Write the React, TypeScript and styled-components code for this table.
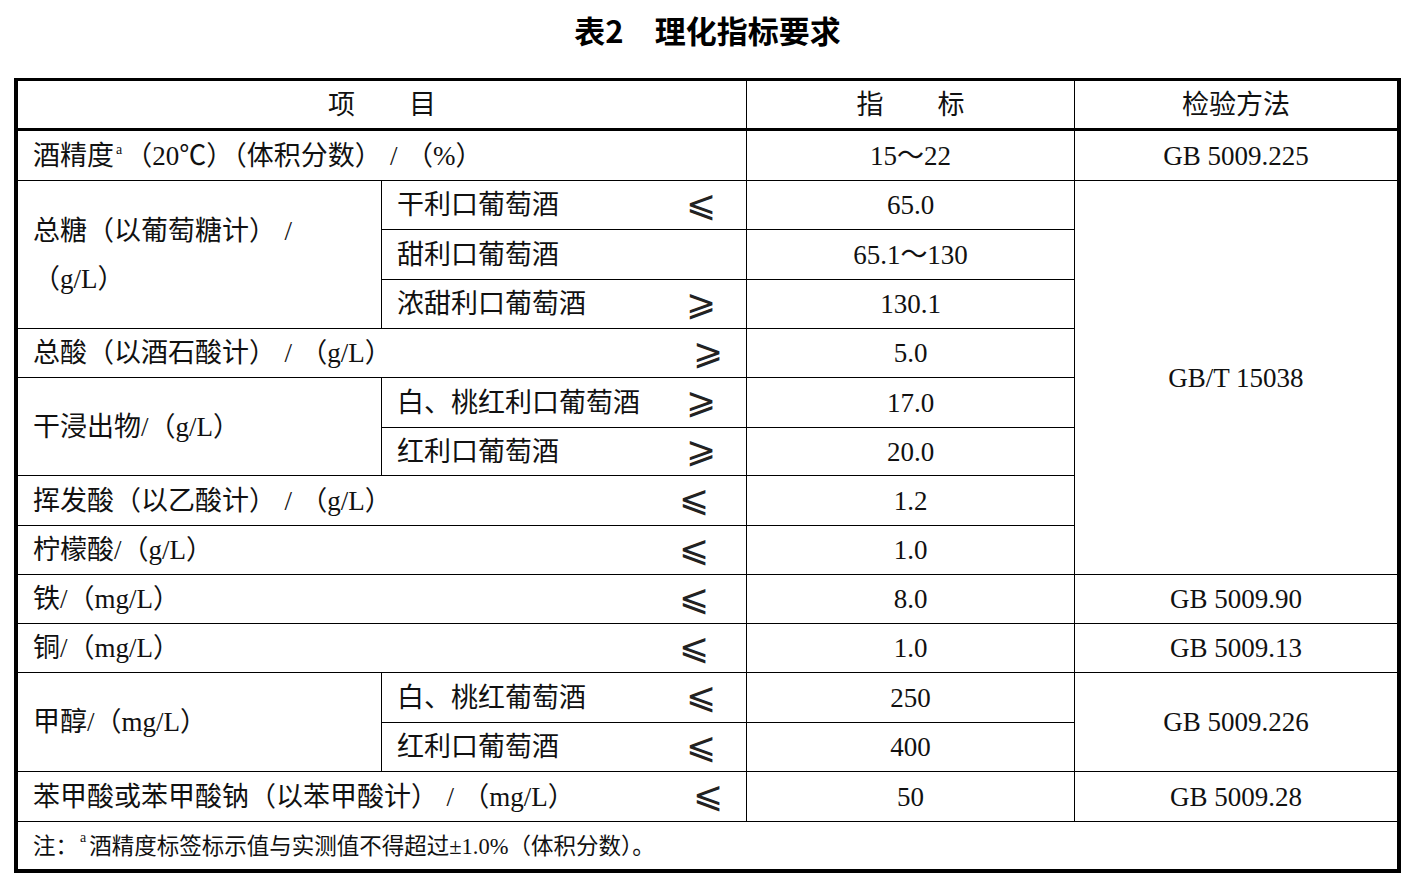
import React from 'react';
import styled, { createGlobalStyle } from 'styled-components';

const Global = createGlobalStyle`
  html, body { margin: 0; padding: 0; background: #fff; }
  body {
    font-family: "Liberation Serif", "Noto Sans CJK SC", serif;
    color: #111;
  }
`;

const Page = styled.div`
  width: 1415px;
  height: 890px;
  box-sizing: border-box;
  padding-left: 14px;
`;

const Title = styled.h1`
  margin: 0;
  width: 1387px;
  height: 78px;
  box-sizing: border-box;
  padding-bottom: 20px;
  display: flex;
  align-items: center;
  justify-content: center;
  font-family: "Noto Sans CJK SC", sans-serif;
  font-weight: 700;
  font-size: 31px;
  color: #000;
`;

const Grid = styled.div`
  display: grid;
  width: 1387px;
  box-sizing: border-box;
  border: 4px solid #000;
  border-top-width: 3px;
  grid-template-columns: 364px 365px 328px 322px;
  grid-template-rows: 50px 50px 49px 50px 49px 49px 50px 48px 50px 49px 49px 49px 50px 49px 50px 47px;
`;

type CellProps = {
  $span?: number;
  $rows?: number;
  $head?: boolean;
  $last?: boolean;
  $note?: boolean;
  $center?: boolean;
  $pr?: number;
};

const Cell = styled.div<CellProps>`
  grid-column: span ${(p) => p.$span ?? 1};
  grid-row: span ${(p) => p.$rows ?? 1};
  box-sizing: border-box;
  border-right: ${(p) => (p.$last ? 'none' : '1px solid #000')};
  border-bottom: ${(p) => (p.$note ? 'none' : p.$head ? '3px solid #000' : '1px solid #000')};
  display: flex;
  align-items: center;
  justify-content: ${(p) => (p.$center ? 'center' : 'space-between')};
  padding: ${(p) => (p.$head ? 2 : 1)}px ${(p) => p.$pr ?? 0}px 0 ${(p) => (p.$center ? 0 : 15)}px;
  font-size: ${(p) => (p.$note ? 22.5 : 27)}px;
  line-height: 1.2;
  white-space: nowrap;
  overflow: hidden;
`;

const TwoLine = styled.span`
  line-height: 48px;
`;

const Sup = styled.span`
  font-size: 14px;
  vertical-align: 0.8em;
  line-height: 0;
  margin: 0 3px 0 2px;
`;

const Slash = styled.span`
  display: inline-block;
  width: 0.9em;
  text-align: center;
  font-family: "Liberation Serif", serif;
`;

const Sym = styled.span`
  display: inline-flex;
  align-items: center;
  justify-content: center;
  width: 26px;
  height: 30px;
  margin-top: -4px;
  font-family: "DejaVu Sans", "Noto Sans CJK SC", sans-serif;
  font-weight: 200;
  font-size: 36px;
  line-height: 1;
  color: #222;
`;

const LE = () => <Sym>⩽</Sym>;
const GE = () => <Sym>⩾</Sym>;
const S = () => <Slash>/</Slash>;

export default function App() {
  return (
    <Page>
      <Global />
      <Title>表2　理化指标要求</Title>
      <Grid>
        <Cell $span={2} $center $head>项　　目</Cell>
        <Cell $center $head>指　　标</Cell>
        <Cell $center $head $last>检验方法</Cell>

        <Cell $span={2}>
          <span>
            酒精度<Sup>a</Sup>（20℃）（体积分数）<S />（%）
          </span>
        </Cell>
        <Cell $center>15～22</Cell>
        <Cell $center $last>GB 5009.225</Cell>

        <Cell $rows={3}>
          <TwoLine>
            总糖（以葡萄糖计）<S />
            <br />
            （g/L）
          </TwoLine>
        </Cell>
        <Cell $pr={32}>
          <span>干利口葡萄酒</span>
          <LE />
        </Cell>
        <Cell $center>65.0</Cell>
        <Cell $center $last $rows={8}>GB/T 15038</Cell>

        <Cell $pr={32}>
          <span>甜利口葡萄酒</span>
        </Cell>
        <Cell $center>65.1～130</Cell>

        <Cell $pr={32}>
          <span>浓甜利口葡萄酒</span>
          <GE />
        </Cell>
        <Cell $center>130.1</Cell>

        <Cell $span={2} $pr={25}>
          <span>总酸（以酒石酸计）<S />（g/L）</span>
          <GE />
        </Cell>
        <Cell $center>5.0</Cell>

        <Cell $rows={2}>
          <span>干浸出物/（g/L）</span>
        </Cell>
        <Cell $pr={32}>
          <span>白、桃红利口葡萄酒</span>
          <GE />
        </Cell>
        <Cell $center>17.0</Cell>

        <Cell $pr={32}>
          <span>红利口葡萄酒</span>
          <GE />
        </Cell>
        <Cell $center>20.0</Cell>

        <Cell $span={2} $pr={39}>
          <span>挥发酸（以乙酸计）<S />（g/L）</span>
          <LE />
        </Cell>
        <Cell $center>1.2</Cell>

        <Cell $span={2} $pr={39}>
          <span>柠檬酸/（g/L）</span>
          <LE />
        </Cell>
        <Cell $center>1.0</Cell>

        <Cell $span={2} $pr={39}>
          <span>铁/（mg/L）</span>
          <LE />
        </Cell>
        <Cell $center>8.0</Cell>
        <Cell $center $last>GB 5009.90</Cell>

        <Cell $span={2} $pr={39}>
          <span>铜/（mg/L）</span>
          <LE />
        </Cell>
        <Cell $center>1.0</Cell>
        <Cell $center $last>GB 5009.13</Cell>

        <Cell $rows={2}>
          <span>甲醇/（mg/L）</span>
        </Cell>
        <Cell $pr={32}>
          <span>白、桃红葡萄酒</span>
          <LE />
        </Cell>
        <Cell $center>250</Cell>
        <Cell $center $last $rows={2}>GB 5009.226</Cell>

        <Cell $pr={32}>
          <span>红利口葡萄酒</span>
          <LE />
        </Cell>
        <Cell $center>400</Cell>

        <Cell $span={2} $pr={25}>
          <span>苯甲酸或苯甲酸钠（以苯甲酸计）<S />（mg/L）</span>
          <LE />
        </Cell>
        <Cell $center>50</Cell>
        <Cell $center $last>GB 5009.28</Cell>

        <Cell $span={4} $note $last>
          <span>
            注：<Sup>a</Sup>酒精度标签标示值与实测值不得超过±1.0%（体积分数）。
          </span>
        </Cell>
      </Grid>
    </Page>
  );
}
